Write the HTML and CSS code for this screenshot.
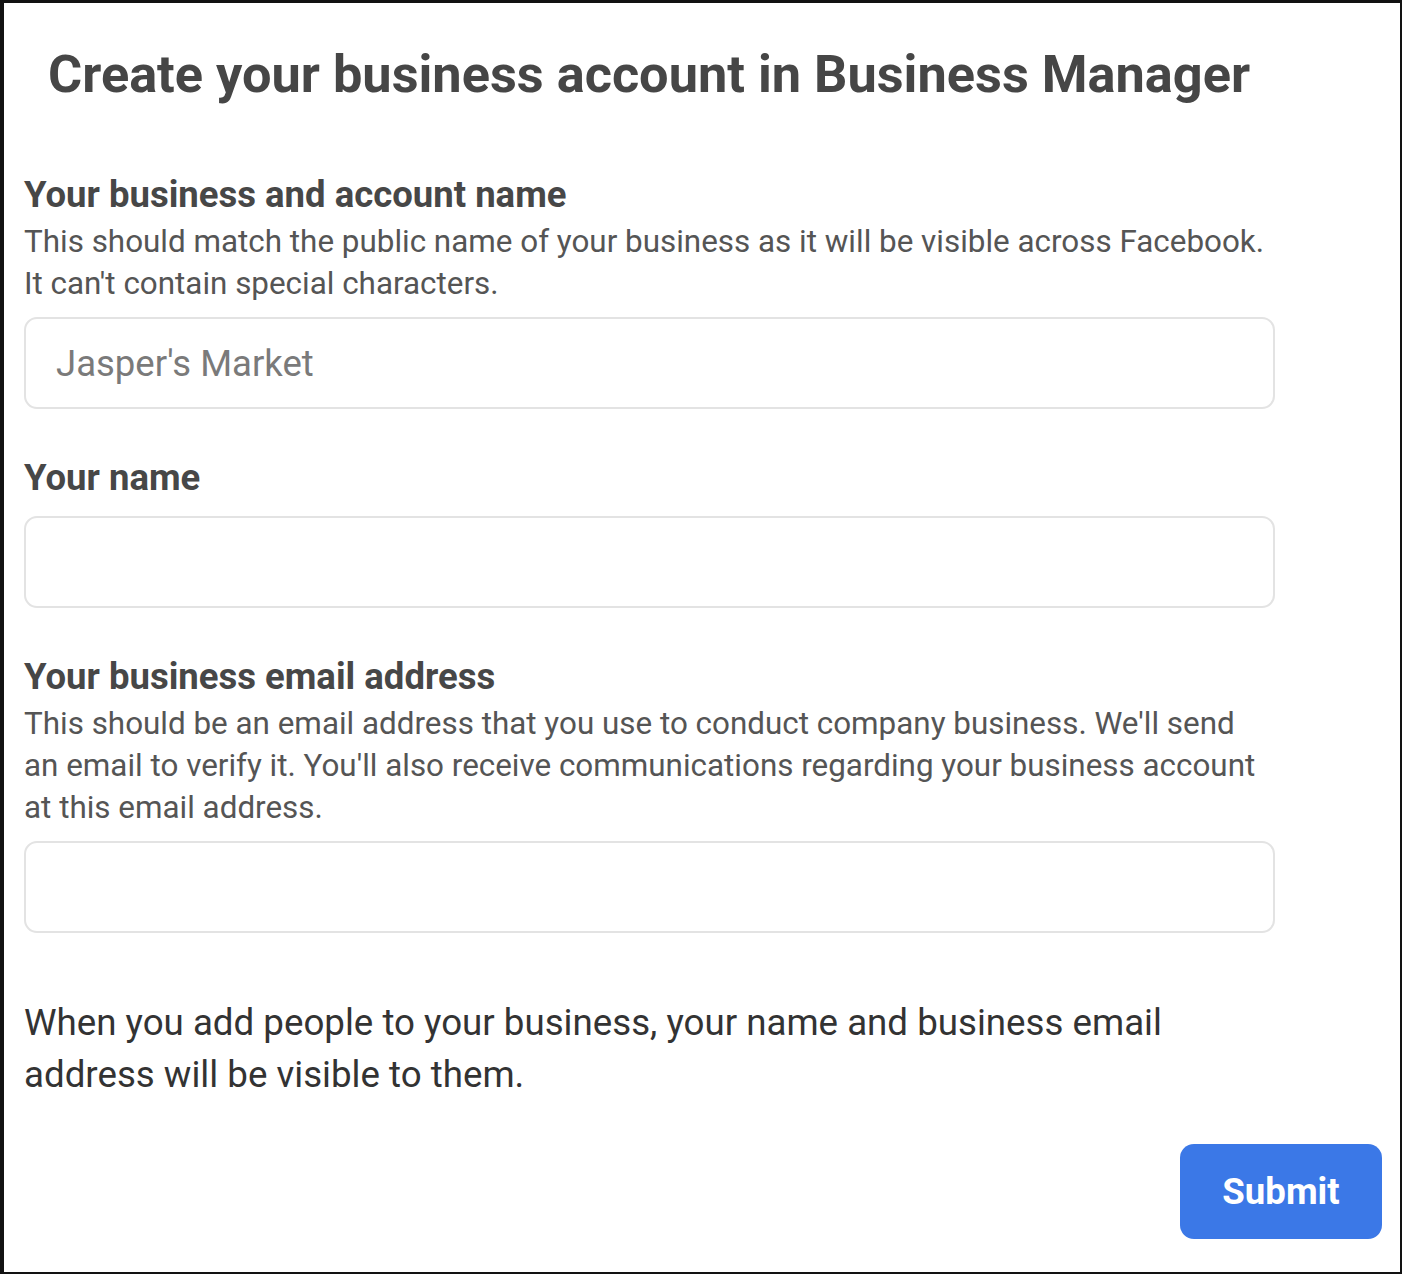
FILE: index.html
```html
<!DOCTYPE html>
<html lang="en">
<head>
  <meta charset="UTF-8">
  <title>Create your business account</title>
  <link rel="stylesheet" href="styles.css">
</head>
<body>
  <div class="frame">
    <h1 class="title">Create your business account in Business Manager</h1>

    <div class="field field-first">
      <div class="label">Your business and account name</div>
      <p class="hint">This should match the public name of your business as it will be visible across Facebook.<br>It can't contain special characters.</p>
      <input class="text-input" type="text" placeholder="Jasper's Market">
    </div>

    <div class="field">
      <div class="label">Your name</div>
      <input class="text-input" type="text">
    </div>

    <div class="field">
      <div class="label">Your business email address</div>
      <p class="hint">This should be an email address that you use to conduct company business. We'll send an email to verify it. You'll also receive communications regarding your business account at this email address.</p>
      <input class="text-input" type="email">
    </div>

    <p class="notice">When you add people to your business, your name and business email address will be visible to them.</p>

    <div class="actions">
      <button class="submit" type="button">Submit</button>
    </div>
  </div>
</body>
</html>
```

FILE: styles.css
```css
html, body {
  margin: 0;
  padding: 0;
  background-color: #ffffff;
  font-family: Roboto, 'Liberation Sans', sans-serif;
}

.frame {
  box-sizing: border-box;
  height: 1274px;
  border-style: solid;
  border-color: #121212;
  border-width: 3px 2px 2px 4px;
  padding: 0 20px;
  display: flex;
  flex-direction: column;
}

.title {
  margin: 36px 0 0 24px;
  font-size: 52.3px;
  font-weight: 700;
  line-height: 70px;
  color: #464646;
}

.field {
  width: 1251px;
  margin-top: 49px;
}

.field-first {
  margin-top: 66px;
}

.label {
  font-size: 36.5px;
  font-weight: 700;
  line-height: 40px;
  color: #474747;
}

.hint {
  margin: 6px 0 12px 0;
  font-size: 31.4px;
  line-height: 42px;
  color: #555555;
}

.text-input {
  display: block;
  box-sizing: border-box;
  width: 100%;
  height: 92px;
  margin-top: 18px;
  padding: 0 30px;
  border: 2px solid #e3e3e3;
  border-radius: 13px;
  font-family: inherit;
  font-size: 36.5px;
  color: #333333;
  outline: none;
}

.hint + .text-input {
  margin-top: 0;
}

.text-input::placeholder {
  color: #7a7a7a;
}

.notice {
  width: 1200px;
  margin: 64px 0 0 0;
  font-size: 36.7px;
  line-height: 52px;
  color: #333333;
}

.actions {
  display: flex;
  justify-content: flex-end;
  margin-top: 43px;
  margin-right: -2px;
}

.submit {
  width: 202px;
  height: 95px;
  border: none;
  border-radius: 14px;
  background-color: #3b78e7;
  color: #ffffff;
  font-family: inherit;
  font-size: 36.6px;
  font-weight: 700;
}
```
